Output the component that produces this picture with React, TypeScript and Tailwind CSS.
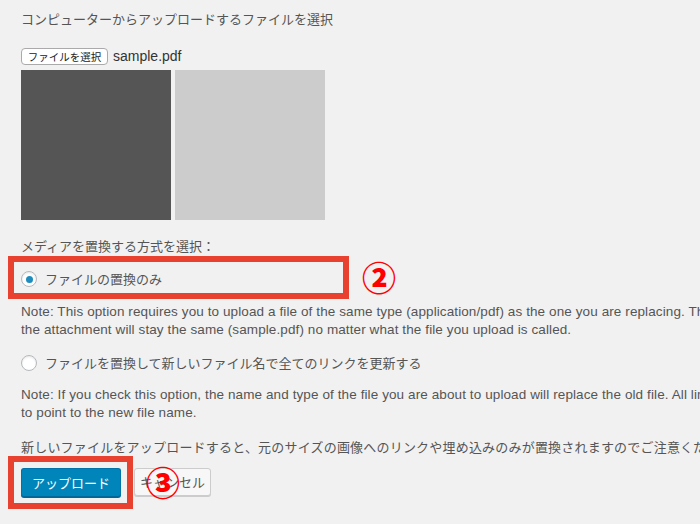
const jp = "font-['Noto_Sans_CJK_JP',sans-serif]";
const en = "font-['Liberation_Sans','Noto_Sans_CJK_JP',sans-serif]";

function Radio({ checked }: { checked?: boolean }) {
  return (
    <span className="flex h-4 w-4 shrink-0 items-center justify-center rounded-full border border-[#b4b9be] bg-white shadow-[inset_0_1px_2px_rgba(0,0,0,0.1)]">
      {checked && <span className="h-[7px] w-[7px] rounded-full bg-[#1e8cbe]" />}
    </span>
  );
}

function Mark({ n }: { n: string }) {
  return (
    <span className="block text-[34px] font-black leading-none text-[#f00] font-['Noto_Sans_CJK_JP',sans-serif]">
      {n}
    </span>
  );
}

export default function App() {
  return (
    <div className={`relative h-[524px] w-[700px] overflow-hidden bg-[#f1f1f1] pl-[21px] pt-[10px] text-[13px] text-[#555] ${jp}`}>
      {/* upload source */}
      <p className="h-[18px] leading-[18px]">コンピューターからアップロードするファイルを選択</p>

      <div className="mt-[20px] flex h-[17px] items-center gap-[5px]">
        <button className="flex h-[17px] w-[87px] items-center justify-center rounded-[4px] border border-[#aaa] bg-white text-[10.5px] text-[#222]">
          ファイルを選択
        </button>
        <span className="text-[14px] text-[#333] font-['Liberation_Sans',sans-serif]">sample.pdf</span>
      </div>

      <div className="mt-[5px] flex gap-[4px]">
        <div className="h-[150px] w-[150px] bg-[#555]" />
        <div className="h-[150px] w-[150px] bg-[#ccc]" />
      </div>

      {/* replace mode */}
      <p className="mt-[17px] h-[18px] leading-[18px]">メディアを置換する方式を選択：</p>

      <div className="relative mt-[15px] flex h-[18px] items-center gap-[8px]">
        <Radio checked />
        <span className="leading-[18px]">ファイルの置換のみ</span>
        <div className="absolute left-[-13px] top-[-14px] h-[43px] w-[341px] border-[6px] border-[#e8412f]" />
        <div className="absolute left-[341px] top-[-10px]">
          <Mark n="②" />
        </div>
      </div>

      <div className={`mt-[15px] whitespace-nowrap text-[13.5px] leading-[18px] tracking-[0.1px] ${en}`}>
        <p>Note: This option requires you to upload a file of the same type (application/pdf) as the one you are replacing. The name of</p>
        <p>the attachment will stay the same (sample.pdf) no matter what the file you upload is called.</p>
      </div>

      <div className="mt-[15px] flex h-[18px] items-center gap-[8px]">
        <Radio />
        <span className="leading-[18px]">ファイルを置換して新しいファイル名で全てのリンクを更新する</span>
      </div>

      <div className={`mt-[14px] whitespace-nowrap text-[13.5px] leading-[18px] tracking-[0.1px] ${en}`}>
        <p>Note: If you check this option, the name and type of the file you are about to upload will replace the old file. All links</p>
        <p>to point to the new file name.</p>
      </div>

      <p className="mt-[16px] h-[18px] whitespace-nowrap leading-[18px] tracking-[0.2px]">
        新しいファイルをアップロードすると、元のサイズの画像へのリンクや埋め込みのみが置換されますのでご注意ください。
      </p>

      {/* actions */}
      <div className="relative mt-[12px] flex gap-[13px]">
        <button className="h-[29px] w-[100px] rounded-[3px] border border-[#0073aa] border-b-[#006799] bg-[#0085ba] text-[13px] text-white shadow-[0_1px_0_#006799]">
          アップロード
        </button>
        <button className="h-[28px] w-[77px] rounded-[3px] border border-[#ccc] bg-[#f7f7f7] text-[13px] text-[#555] shadow-[0_1px_0_#ccc]">
          キャンセル
        </button>
        <div className="absolute left-[-13px] top-[-12px] h-[53px] w-[125px] border-[6px] border-[#e8412f]" />
        <div className="absolute left-[125px] top-[-3px]">
          <Mark n="③" />
        </div>
      </div>
    </div>
  );
}
